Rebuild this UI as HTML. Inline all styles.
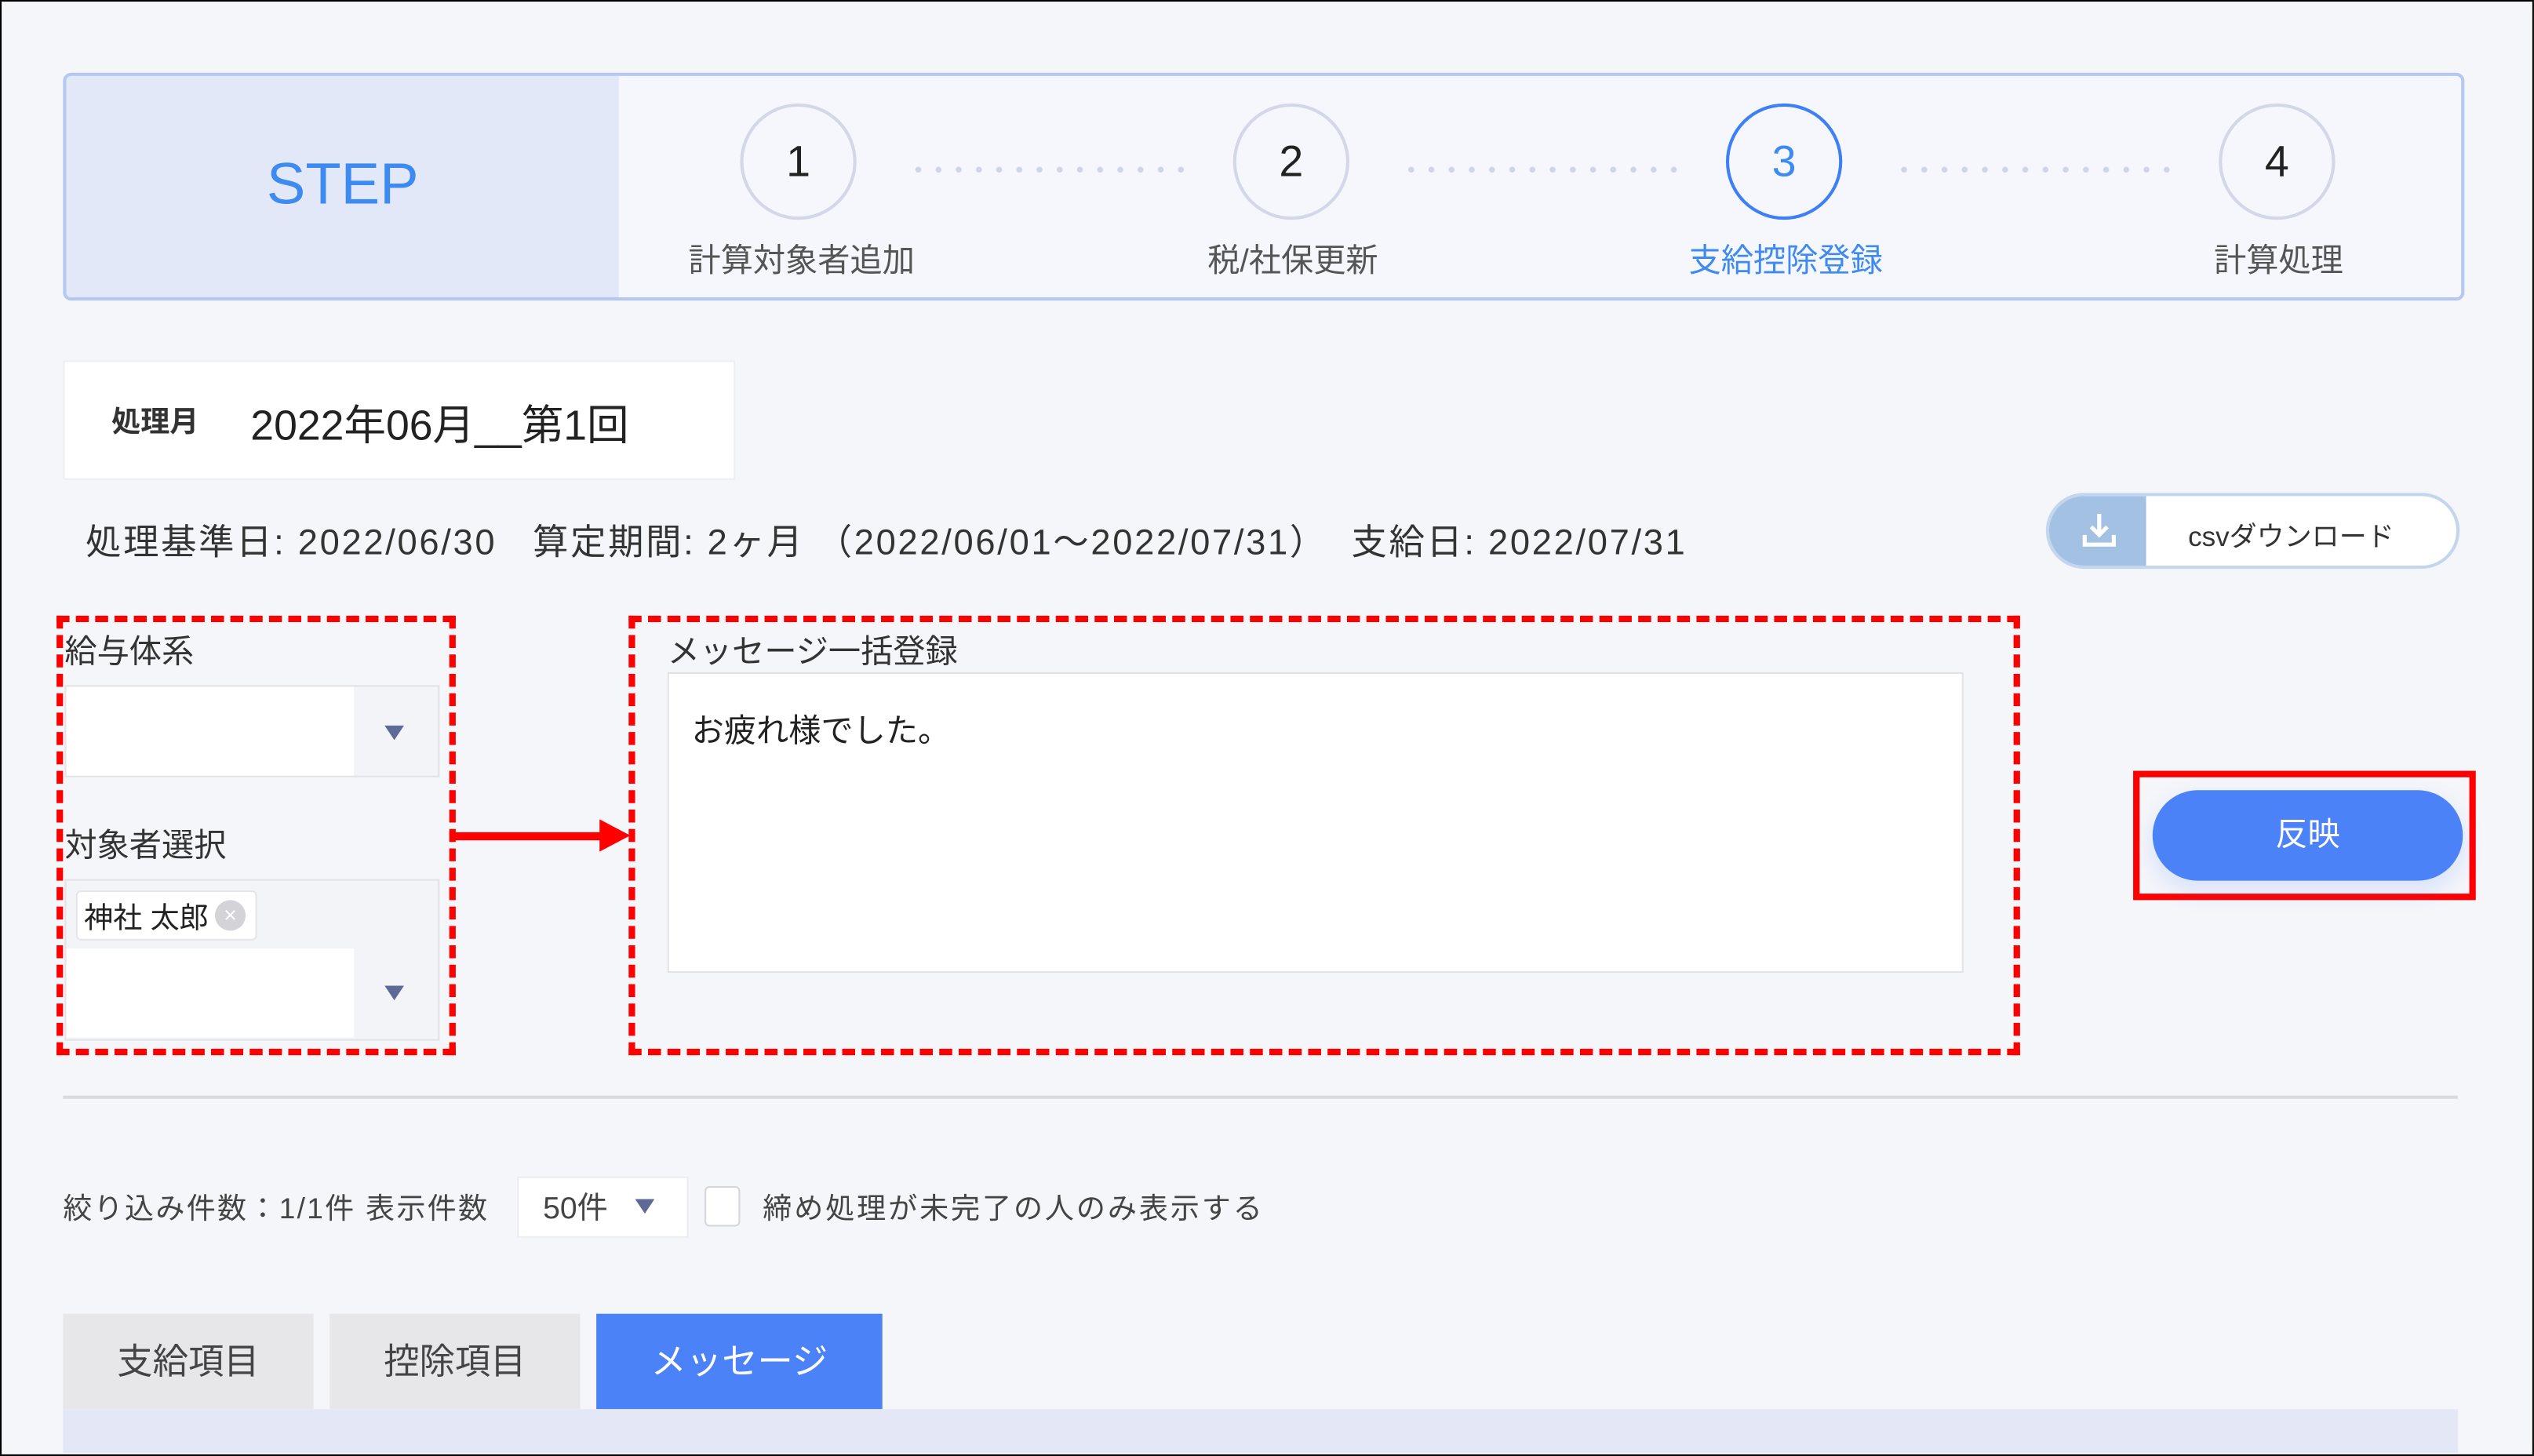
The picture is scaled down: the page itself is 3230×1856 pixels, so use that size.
<!DOCTYPE html>
<html><head><meta charset="utf-8">
<style>
html,body{margin:0;padding:0;width:3230px;height:1855px;overflow:hidden;background:#f5f6fa;}
#w{position:absolute;left:0;top:0;width:1568px;height:901px;transform:scale(2.0599);transform-origin:0 0;background:#f5f6fa;font-family:"Liberation Sans","Noto Sans CJK JP",sans-serif;color:#333;}
.a{position:absolute;}
.frame{left:0;top:0;width:1566px;height:899px;border:1px solid #000;}
.step{left:39px;top:45px;width:1482px;height:137px;border:2px solid #b4c8f2;border-radius:5px;background:#f6f7fc;overflow:hidden;}
.stepl{left:0;top:0;width:342px;height:137px;background:#e3e8f8;color:#3d8bf0;font-size:36px;text-align:center;line-height:134px;}
.c{width:68px;height:68px;border:2px solid #d3d7e8;border-radius:50%;text-align:center;line-height:68px;font-size:27px;color:#222;}
.lb{font-size:20px;color:#555;width:200px;text-align:center;}
.dots{height:4px;background-image:radial-gradient(circle,#cfd4e6 1.6px,transparent 2px);background-size:12.5px 4px;}
.sel{background:#fff;border:1px solid #e3e3e6;}
.tri{width:0;height:0;border-left:6px solid transparent;border-right:6px solid transparent;border-top:9px solid #5d6a98;}
.dash{border:4px dashed #f00;}
.tab{top:813px;height:59px;font-size:22px;text-align:center;line-height:59px;color:#444;background:#e7e7ea;}
</style></head><body><div id="w">
<div class="a frame"></div>
<div class="a step">
 <div class="a stepl">STEP</div>
</div>
<div class="a c" style="left:458px;top:64px">1</div>
<div class="a c" style="left:763px;top:64px">2</div>
<div class="a c" style="left:1068px;top:64px;border-color:#3d7ff5;color:#3d8bf0">3</div>
<div class="a c" style="left:1373px;top:64px">4</div>
<div class="a dots" style="left:562px;top:103px;width:172px"></div>
<div class="a dots" style="left:867px;top:103px;width:172px"></div>
<div class="a dots" style="left:1172px;top:103px;width:172px"></div>
<div class="a lb" style="left:396px;top:145px">計算対象者追加</div>
<div class="a lb" style="left:700px;top:145px">税/社保更新</div>
<div class="a lb" style="left:1005px;top:145px;color:#3d8bf0">支給控除登録</div>
<div class="a lb" style="left:1310px;top:145px">計算処理</div>

<div class="a" style="left:39px;top:223px;width:414px;height:72px;background:#fff;border:1px solid #eceef4"></div>
<div class="a" style="left:69px;top:247px;font-size:18px;font-weight:bold;color:#333">処理月</div>
<div class="a" style="left:155px;top:243px;font-size:26px;color:#222">2022年06月__第1回</div>
<div class="a" style="left:53px;top:318px;font-size:22px;color:#333;white-space:pre;letter-spacing:1.3px">処理基準日: 2022/06/30   算定期間: 2ヶ月 （2022/06/01～2022/07/31）  支給日: 2022/07/31</div>

<div class="a" style="left:1266px;top:305px;width:252px;height:43px;border:2px solid #c4d6ee;border-radius:24px;background:#fff;overflow:hidden">
 <div class="a" style="left:0;top:0;width:60px;height:43px;background:#a3c1e2"></div>
 <svg class="a" style="left:20px;top:10px" width="22" height="22" viewBox="0 0 22 22"><path d="M11 1v13M6 9l5 5 5-5M2 14v6h18v-6" stroke="#fff" stroke-width="2.5" fill="none"/></svg>
 <div class="a" style="left:86px;top:11px;font-size:17px;color:#333">csvダウンロード</div>
</div>

<div class="a dash" style="left:35px;top:381px;width:239px;height:264px"></div>
<div class="a dash" style="left:389px;top:381px;width:853px;height:264px"></div>
<div class="a" style="left:40px;top:387px;font-size:20px">給与体系</div>
<div class="a sel" style="left:40px;top:424px;width:230px;height:55px;background:#f3f4f8"><div class="a" style="left:0;top:0;width:178px;height:55px;background:#fff"></div><div class="a tri" style="left:197px;top:24px"></div></div>
<div class="a" style="left:40px;top:507px;font-size:20px">対象者選択</div>
<div class="a sel" style="left:40px;top:544px;width:230px;height:98px;background:#f3f4f8">
 <div class="a" style="left:6px;top:6px;width:110px;height:29px;background:#fff;border:1px solid #e6e6ea;border-radius:3px"></div>
 <div class="a" style="left:11px;top:9px;font-size:18px;color:#222">神社 太郎</div>
 <div class="a" style="left:92px;top:12px;width:19px;height:19px;border-radius:50%;background:#d4d4d8;color:#fff;font-size:14px;line-height:19px;text-align:center">×</div>
 <div class="a" style="left:0;top:42px;width:178px;height:55px;background:#fff"></div>
 <div class="a tri" style="left:197px;top:65px"></div>
</div>
<div class="a" style="left:281px;top:515px;width:92px;height:5px;background:#f00"></div>
<div class="a" style="left:371px;top:507px;width:0;height:0;border-top:10px solid transparent;border-bottom:10px solid transparent;border-left:19px solid #f00"></div>

<div class="a" style="left:413px;top:387px;font-size:20px">メッセージ一括登録</div>
<div class="a" style="left:413px;top:416px;width:800px;height:184px;background:#fff;border:1px solid #e2e2e6"></div>
<div class="a" style="left:428px;top:436px;font-size:20px;color:#222">お疲れ様でした。</div>

<div class="a" style="left:1320px;top:477px;width:204px;height:72px;border:4px solid #f00"></div>
<div class="a" style="left:1332px;top:489px;width:192px;height:56px;border-radius:28px;background:#4b82f8;color:#fff;font-size:20px;text-align:center;line-height:56px;box-shadow:0 6px 14px rgba(75,130,248,.18)">反映</div>

<div class="a" style="left:39px;top:678px;width:1482px;height:2px;background:#d9d9de"></div>
<div class="a" style="left:39px;top:734px;font-size:18px;color:#444;letter-spacing:1.1px">絞り込み件数：1/1件 表示件数</div>
<div class="a" style="left:320px;top:728px;width:104px;height:36px;background:#fff;border:1px solid #ececf0"></div>
<div class="a" style="left:336px;top:733px;font-size:19px;color:#444">50件</div>
<div class="a tri" style="left:393px;top:742px"></div>
<div class="a" style="left:436px;top:734px;width:20px;height:23px;background:#fff;border:1px solid #d5d5da;border-radius:3px"></div>
<div class="a" style="left:472px;top:734px;font-size:18px;color:#444;letter-spacing:1.4px">締め処理が未完了の人のみ表示する</div>

<div class="a tab" style="left:39px;width:155px">支給項目</div>
<div class="a tab" style="left:204px;width:155px">控除項目</div>
<div class="a tab" style="left:369px;width:177px;background:#4b82f8;color:#fff">メッセージ</div>
<div class="a" style="left:39px;top:872px;width:1482px;height:27px;background:#e4e8f6"></div>
</div></body></html>
